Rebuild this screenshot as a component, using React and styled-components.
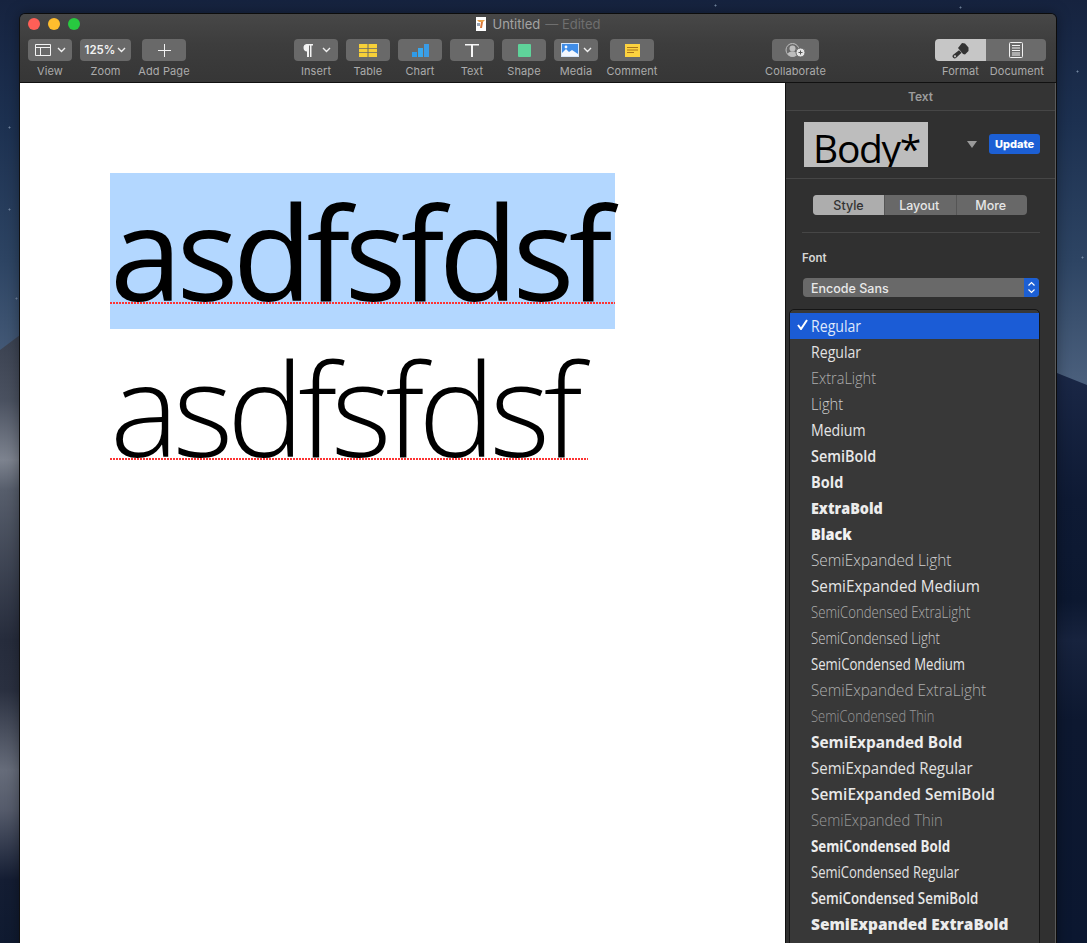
import React from 'react';
import styled, { createGlobalStyle } from 'styled-components';

const GlobalStyle = createGlobalStyle`
  html, body {
    margin: 0;
    padding: 0;
    height: 943px;
    overflow: hidden;
    background: #14233f;
    font-family: Inter, "Liberation Sans", sans-serif;
  }
  * { box-sizing: border-box; }
`;

const Desktop = styled.div`
  position: relative;
  height: 943px;
  overflow: hidden;
  padding: 13px 30px 0 19px;
  background:
    radial-gradient(circle, #71859f 0 .8px, transparent 1.2px) 8px 126px / 3px 3px no-repeat,
    radial-gradient(circle, #71859f 0 .8px, transparent 1.2px) 8px 208px / 3px 3px no-repeat,
    radial-gradient(circle, #71859f 0 .8px, transparent 1.2px) 15px 297px / 3px 3px no-repeat,
    radial-gradient(circle, #71859f 0 .8px, transparent 1.2px) 1076px 70px / 3px 3px no-repeat,
    radial-gradient(circle, #71859f 0 .8px, transparent 1.2px) 1081px 256px / 3px 3px no-repeat,
    radial-gradient(circle, #71859f 0 .8px, transparent 1.2px) 959px 6px / 3px 3px no-repeat,
    radial-gradient(circle, #71859f 0 .8px, transparent 1.2px) 714px 4px / 3px 3px no-repeat,
    linear-gradient(180deg, #16233f 0, #1c3050 120px, #2d4463 260px, #4a5f7c 380px);

  /* dunes, left and right of the window */
  &::before {
    content: '';
    position: absolute;
    inset: 0;
    clip-path: polygon(0 350px, 20px 335px, 20px 943px, 0 943px);
    background: linear-gradient(180deg, #3a4150 335px, #4a5160 400px, #7d838f 460px, #575e6c 490px, #262c3c 640px, #2a3040 690px, #666c7a 770px, #555b6b 810px, #141d33 880px, #0f1a30 943px);
  }
  &::after {
    content: '';
    position: absolute;
    inset: 0;
    clip-path: polygon(1057px 373px, 1087px 385px, 1087px 943px, 1057px 943px);
    background: linear-gradient(180deg, #1a2746 373px, #0e1a34 500px, #0c1830 600px, #17233e 640px, #0d1830 720px, #0b1730 943px);
  }
`;

const Window = styled.div`
  position: relative;
  z-index: 1;
  width: 1038px;
  height: 960px;
  display: flex;
  flex-direction: column;
  border: 1px solid #0c0c0c;
  border-left-color: #111;
  border-radius: 6px 6px 0 0;
  overflow: hidden;
  box-shadow: 0 0 14px rgba(0, 0, 0, .35);
`;

const TitleBar = styled.header`
  flex: none;
  height: 69px;
  border-bottom: 1px solid #111;
  background: linear-gradient(180deg, #474747 0, #3d3d3d 30px, #363636 100%);
`;

const TitleRow = styled.div`
  position: relative;
  height: 20px;
  margin-bottom: 5px;
  display: flex;
  align-items: center;
  justify-content: center;
  font-size: 13px;
  color: #a3a3a3;
`;

const Lights = styled.div`
  position: absolute;
  left: 8px;
  top: 4px;
  display: flex;
  gap: 8px;
`;

const Light = styled.span`
  width: 12px;
  height: 12px;
  border-radius: 50%;
  background: ${({ $color }) => $color};
`;

const DocIcon = styled.svg`
  width: 10px;
  height: 14px;
  margin-right: 7px;
`;

const Edited = styled.span`
  color: #6f6f6f;
  margin-left: 5px;
`;

const Toolbar = styled.div`
  display: flex;
  padding-left: 8px;
`;

const ToolItem = styled.div`
  width: ${({ $width }) => $width || 44}px;
  margin-left: ${({ $gap }) => $gap || 0}px;
  display: flex;
  flex-direction: column;
  align-items: center;
`;

const ToolButton = styled.div`
  width: 100%;
  height: 22px;
  display: flex;
  align-items: center;
  justify-content: center;
  gap: ${({ $inner }) => $inner || 0}px;
  border-radius: 4px;
  background: #696969;
  color: #f2f2f2;
  font-size: 11.5px;
  font-weight: 600;
`;

const ToolLabel = styled.span`
  margin-top: 4px;
  font-size: 11px;
  line-height: 13px;
  letter-spacing: .1px;
  color: #ababab;
  white-space: nowrap;
`;

const SegmentGroup = styled.div`
  width: 111px;
  margin-left: 116px;
`;

const SegmentButtons = styled.div`
  height: 22px;
  display: flex;
  border-radius: 4px;
  overflow: hidden;
`;

const Segment = styled.div`
  flex: ${({ $active }) => ($active ? '0 0 51px' : 1)};
  display: flex;
  align-items: center;
  justify-content: center;
  background: ${({ $active }) => ($active ? '#c6c6c6' : '#6b6b6b')};
`;

const SegmentLabels = styled.div`
  display: flex;
  justify-content: space-between;
  padding: 0 2px 0 7px;
`;

const Body = styled.div`
  flex: 1;
  display: flex;
  min-height: 0;
`;

const Canvas = styled.main`
  flex: none;
  width: 766px;
  background: #fff;
  padding: 90px 0 0 90px;
  border-right: 1px solid #111;
`;

const Line = styled.div`
  position: relative;
  width: ${({ $width }) => $width}px;
  height: 156px;
  background: ${({ $selected }) => ($selected ? '#b3d7ff' : 'transparent')};
  color: #000;
  font-family: "Open Sans", sans-serif;
  font-size: 130px;
  font-weight: ${({ $weight }) => $weight};
  line-height: 156px;
  letter-spacing: ${({ $spacing }) => $spacing}px;
  white-space: nowrap;

  /* spell check underline */
  &::after {
    content: '';
    position: absolute;
    left: 0;
    right: 0;
    top: 129px;
    height: 2px;
    background: repeating-linear-gradient(90deg, #ff3333 0 2px, transparent 2px 3px);
  }
`;

const Sidebar = styled.aside`
  flex: 1;
  background: #303030;
  border-right: 1px solid #5a5a5a;
`;

const SidebarTitle = styled.div`
  height: 28px;
  display: flex;
  align-items: center;
  justify-content: center;
  background: #343434;
  border-bottom: 1px solid #464646;
  font-size: 12px;
  font-weight: 600;
  color: #9c9c9c;
`;

const StyleRow = styled.div`
  height: 68px;
  display: flex;
  align-items: center;
  padding-left: 18px;
  border-bottom: 1px solid #464646;
`;

const StylePreview = styled.div`
  width: 124px;
  height: 45px;
  overflow: hidden;
  padding-left: 9px;
  background: #bdbdbd;
  color: #000;
  font-family: "Open Sans", sans-serif;
  font-size: 39px;
  letter-spacing: -1.3px;
  line-height: 51px;
  white-space: nowrap;
`;

const StyleCaret = styled.span`
  flex: none;
  width: 0;
  height: 0;
  margin-left: 39px;
  border-left: 5.5px solid transparent;
  border-right: 5.5px solid transparent;
  border-top: 7px solid #9a9a9a;
`;

const UpdateButton = styled.div`
  flex: none;
  width: 51px;
  height: 20px;
  margin: -1px 0 0 12px;
  display: flex;
  align-items: center;
  justify-content: center;
  border-radius: 3px;
  background: #1c5fd4;
  color: #fff;
  font-size: 11px;
  font-weight: 800;
`;

const Tabs = styled.div`
  width: 214px;
  height: 20px;
  margin: 16px 0 0 27px;
  display: flex;
  border-radius: 4px;
  overflow: hidden;
  background: #686868;
`;

const Tab = styled.div`
  flex: none;
  width: ${({ $active }) => ($active ? 71 : 71.5)}px;
  display: flex;
  align-items: center;
  justify-content: center;
  padding-right: ${({ $active }) => ($active ? 0 : 2)}px;
  font-size: 12.5px;
  font-weight: 500;
  color: ${({ $active }) => ($active ? '#333' : '#e6e6e6')};
  background: ${({ $active }) => ($active ? '#adadad' : 'transparent')};
  & + & { border-left: 1px solid #555; }
`;

const Divider = styled.div`
  width: 238px;
  height: 1px;
  margin: 17px 0 0 16px;
  background: #464646;
`;

const FontLabel = styled.div`
  margin: 18px 0 0 16px;
  font-size: 11.5px;
  line-height: 14px;
  font-weight: 600;
  color: #d6d6d6;
`;

const FontSelect = styled.div`
  width: 236px;
  height: 19px;
  margin: 13px 0 0 17px;
  display: flex;
  align-items: center;
  justify-content: space-between;
  padding: 1px 0 0 8px;
  border-radius: 4px;
  overflow: hidden;
  background: #696969;
  color: #e8e8e8;
  font-size: 12.5px;
  font-weight: 500;
`;

const SelectStepper = styled.span`
  width: 15px;
  height: 19px;
  margin-top: -1px;
  display: flex;
  align-items: center;
  justify-content: center;
  background: #1c5fd4;
`;

const FontMenu = styled.div`
  width: 251px;
  height: 640px;
  margin: 12px 0 0 3px;
  padding-top: 3px;
  border: 1px solid #151515;
  border-radius: 5px 5px 0 0;
  background: #383838;
`;

const FontRow = styled.div`
  position: relative;
  height: 26px;
  display: flex;
  align-items: center;
  padding-left: 21px;
  background: ${({ $selected }) => ($selected ? '#1b5cd6' : 'transparent')};
`;

const FontName = styled.span`
  display: inline-block;
  transform: scaleX(${({ $scale }) => $scale});
  transform-origin: left center;
  color: ${({ $color }) => $color};
  font-family: "Open Sans", "Noto Sans", sans-serif;
  font-size: 15.5px;
  font-weight: ${({ $weight }) => $weight};
  white-space: nowrap;
`;

const Check = styled.svg`
  position: absolute;
  left: 7px;
  top: 6px;
  width: 11px;
  height: 11px;
`;

const Chevron = () => (
  <svg width="9" height="6" viewBox="0 0 9 6" fill="none" stroke="#f0f0f0" strokeWidth="1.4">
    <path d="M1 1l3.5 3.5L8 1" />
  </svg>
);

const FONT_ROWS = [
  { label: 'Regular', weight: 400, scale: 0.91, color: '#e2e2e2' },
  { label: 'ExtraLight', weight: 300, scale: 0.935, color: '#adadad' },
  { label: 'Light', weight: 300, scale: 0.95, color: '#cfcfcf' },
  { label: 'Medium', weight: 500, scale: 0.91, color: '#e6e6e6' },
  { label: 'SemiBold', weight: 600, scale: 0.93, color: '#e8e8e8' },
  { label: 'Bold', weight: 700, scale: 0.935, color: '#ececec' },
  { label: 'ExtraBold', weight: 800, scale: 0.925, color: '#ececec' },
  { label: 'Black', weight: 800, scale: 0.935, color: '#f2f2f2' },
  { label: 'SemiExpanded Light', weight: 300, scale: 0.99, color: '#cfcfcf' },
  { label: 'SemiExpanded Medium', weight: 500, scale: 0.985, color: '#e6e6e6' },
  { label: 'SemiCondensed ExtraLight', weight: 300, scale: 0.85, color: '#adadad' },
  { label: 'SemiCondensed Light', weight: 300, scale: 0.85, color: '#cfcfcf' },
  { label: 'SemiCondensed Medium', weight: 500, scale: 0.85, color: '#e6e6e6' },
  { label: 'SemiExpanded ExtraLight', weight: 300, scale: 0.986, color: '#adadad' },
  { label: 'SemiCondensed Thin', weight: 300, scale: 0.835, color: '#999' },
  { label: 'SemiExpanded Bold', weight: 700, scale: 0.995, color: '#ececec' },
  { label: 'SemiExpanded Regular', weight: 400, scale: 0.97, color: '#e2e2e2' },
  { label: 'SemiExpanded SemiBold', weight: 600, scale: 0.995, color: '#e8e8e8' },
  { label: 'SemiExpanded Thin', weight: 300, scale: 0.955, color: '#999' },
  { label: 'SemiCondensed Bold', weight: 700, scale: 0.861, color: '#ececec' },
  { label: 'SemiCondensed Regular', weight: 400, scale: 0.84, color: '#e2e2e2' },
  { label: 'SemiCondensed SemiBold', weight: 600, scale: 0.86, color: '#e8e8e8' },
  { label: 'SemiExpanded ExtraBold', weight: 800, scale: 0.995, color: '#ececec' },
];

export default function App() {
  return (
    <Desktop>
      <GlobalStyle />
      <Window>
        <TitleBar>
          <TitleRow>
            <Lights>
              <Light $color="#ff5f57" />
              <Light $color="#ffbd2e" />
              <Light $color="#28c940" />
            </Lights>
            <DocIcon viewBox="0 0 10 14">
              <rect width="10" height="14" fill="#fff" />
              <path d="M1 3h8L7 5H3z" fill="#e8a04a" />
              <path d="M5 5h2l-1 6H4z" fill="#d9773a" />
              <rect x="1" y="6" width="3" height="3" fill="#9aa5b5" />
            </DocIcon>
            Untitled<Edited>— Edited</Edited>
          </TitleRow>
          <Toolbar>
            <ToolItem>
              <ToolButton $inner={6}>
                <svg width="16" height="12" viewBox="0 0 16 12" fill="none" stroke="#f2f2f2">
                  <path d="M.5.5h15v11H.5zM.5 3.5h15M5.5 3.5v8" />
                </svg>
                <Chevron />
              </ToolButton>
              <ToolLabel>View</ToolLabel>
            </ToolItem>
            <ToolItem $width={51} $gap={8}>
              <ToolButton $inner={2}>125% <Chevron /></ToolButton>
              <ToolLabel>Zoom</ToolLabel>
            </ToolItem>
            <ToolItem $gap={11}>
              <ToolButton>
                <svg width="13" height="13" viewBox="0 0 13 13" stroke="#f2f2f2"><path d="M6.5 0v13M0 6.5h13" /></svg>
              </ToolButton>
              <ToolLabel>Add Page</ToolLabel>
            </ToolItem>
            <ToolItem $gap={108}>
              <ToolButton $inner={9}>
                <svg width="11" height="13" viewBox="0 0 11 13" fill="#f2f2f2">
                  <path d="M4.5 0H11v1.5H9.5V13H8V1.5H7V13H5V7.5A3.8 3.8 0 0 1 4.5 0z" />
                </svg>
                <Chevron />
              </ToolButton>
              <ToolLabel>Insert</ToolLabel>
            </ToolItem>
            <ToolItem $gap={8}>
              <ToolButton>
                <svg width="18" height="13" viewBox="0 0 18 13" fill="#f7d038">
                  <path d="M0 0h8.5v4H0zM9.5 0H18v4H9.5zM0 4.7h8.5v3.6H0zM9.5 4.7H18v3.6H9.5zM0 9h8.5v4H0zM9.5 9H18v4H9.5z" />
                </svg>
              </ToolButton>
              <ToolLabel>Table</ToolLabel>
            </ToolItem>
            <ToolItem $gap={8}>
              <ToolButton>
                <svg width="17" height="13" viewBox="0 0 17 13">
                  <rect y="8" width="5" height="5" fill="#2f9be8" />
                  <rect x="6" y="4" width="5" height="9" fill="#38a8ee" />
                  <rect x="12" width="5" height="13" fill="#3a9ce6" />
                </svg>
              </ToolButton>
              <ToolLabel>Chart</ToolLabel>
            </ToolItem>
            <ToolItem $gap={8}>
              <ToolButton>
                <svg width="14" height="13" viewBox="0 0 14 13" fill="#f7f7f7"><path d="M0 0h14v1.6H8V13H6V1.6H0z" /></svg>
              </ToolButton>
              <ToolLabel>Text</ToolLabel>
            </ToolItem>
            <ToolItem $gap={8}>
              <ToolButton>
                <svg width="13" height="13" viewBox="0 0 13 13"><rect width="13" height="13" rx="1" fill="#5fd39a" /></svg>
              </ToolButton>
              <ToolLabel>Shape</ToolLabel>
            </ToolItem>
            <ToolItem $gap={8}>
              <ToolButton $inner={4}>
                <svg width="18" height="14" viewBox="0 0 18 14">
                  <rect width="18" height="14" fill="#d5e6fb" />
                  <rect x="1" y="1" width="16" height="12" fill="#3f8de8" />
                  <path d="M1 13V10l4-4 3 3 3-2 6 4v2z" fill="#f4f8ff" />
                  <circle cx="5" cy="4" r="1.4" fill="#f4f8ff" />
                </svg>
                <Chevron />
              </ToolButton>
              <ToolLabel>Media</ToolLabel>
            </ToolItem>
            <ToolItem $gap={12}>
              <ToolButton>
                <svg width="15" height="13" viewBox="0 0 15 13">
                  <rect width="15" height="13" fill="#fdd33f" />
                  <path d="M2 3.5h11M2 6h11M2 8.5h7" stroke="#a8741c" />
                </svg>
              </ToolButton>
              <ToolLabel>Comment</ToolLabel>
            </ToolItem>
            <ToolItem $width={47} $gap={118}>
              <ToolButton>
                <svg width="21" height="15" viewBox="0 0 21 15">
                  <circle cx="7.5" cy="7" r="6.5" fill="none" stroke="#bdbdbd" />
                  <circle cx="7.5" cy="5.5" r="3" fill="#bdbdbd" />
                  <path d="M2.5 11c1-2 3-2.5 5-2.5s4 .5 5 2.5a6 6 0 0 1-10 0z" fill="#bdbdbd" />
                  <circle cx="15.5" cy="9.5" r="4.5" fill="#e4e4e4" stroke="#696969" />
                  <path d="M15.5 7.5v4M13.5 9.5h4" stroke="#555" />
                </svg>
              </ToolButton>
              <ToolLabel>Collaborate</ToolLabel>
            </ToolItem>
            <SegmentGroup>
              <SegmentButtons>
                <Segment $active>
                  <svg width="17" height="17" viewBox="0 0 17 17" fill="#333">
                    <path d="M6 6l4-5 3 .5 3.5 4V9L13 12.5l-2-.5z" />
                    <path d="M7 8.2l2.6 2.6-5.4 5a2 2 0 0 1-3-3zM3 13.2a1 1 0 1 0 .01 0z" fillRule="evenodd" />
                  </svg>
                </Segment>
                <Segment>
                  <svg width="14" height="16" viewBox="0 0 14 16" fill="none" stroke="#f2f2f2">
                    <rect x=".5" y=".5" width="13" height="15" rx="1" />
                    <path d="M3 3.5h8M3 6h8M3 8.5h8M3 11h8M3 13h8" />
                  </svg>
                </Segment>
              </SegmentButtons>
              <SegmentLabels>
                <ToolLabel>Format</ToolLabel>
                <ToolLabel>Document</ToolLabel>
              </SegmentLabels>
            </SegmentGroup>
          </Toolbar>
        </TitleBar>
        <Body>
          <Canvas>
            <Line $selected $width={505} $weight={400} $spacing={-5.75}>asdfsfdsf</Line>
            <Line $width={478} $weight={300} $spacing={-6.2}>asdfsfdsf</Line>
          </Canvas>
          <Sidebar>
            <SidebarTitle>Text</SidebarTitle>
            <StyleRow>
              <StylePreview>Body*</StylePreview>
              <StyleCaret />
              <UpdateButton>Update</UpdateButton>
            </StyleRow>
            <Tabs>
              <Tab $active>Style</Tab>
              <Tab>Layout</Tab>
              <Tab>More</Tab>
            </Tabs>
            <Divider />
            <FontLabel>Font</FontLabel>
            <FontSelect>
              Encode Sans
              <SelectStepper>
                <svg width="9" height="13" viewBox="0 0 9 13" fill="none" stroke="#fff" strokeWidth="1.2">
                  <path d="M1.5 4.5l3-3 3 3M1.5 8.5l3 3 3-3" />
                </svg>
              </SelectStepper>
            </FontSelect>
            <FontMenu>
              <FontRow $selected>
                <Check viewBox="0 0 11 11" fill="none" stroke="#fff" strokeWidth="2"><path d="M1 6l3 4 6-9" /></Check>
                <FontName $scale={0.91} $weight={400} $color="#dfe8fb">Regular</FontName>
              </FontRow>
              {FONT_ROWS.map((row) => (
                <FontRow key={row.label}>
                  <FontName $scale={row.scale} $weight={row.weight} $color={row.color}>{row.label}</FontName>
                </FontRow>
              ))}
            </FontMenu>
          </Sidebar>
        </Body>
      </Window>
    </Desktop>
  );
}
